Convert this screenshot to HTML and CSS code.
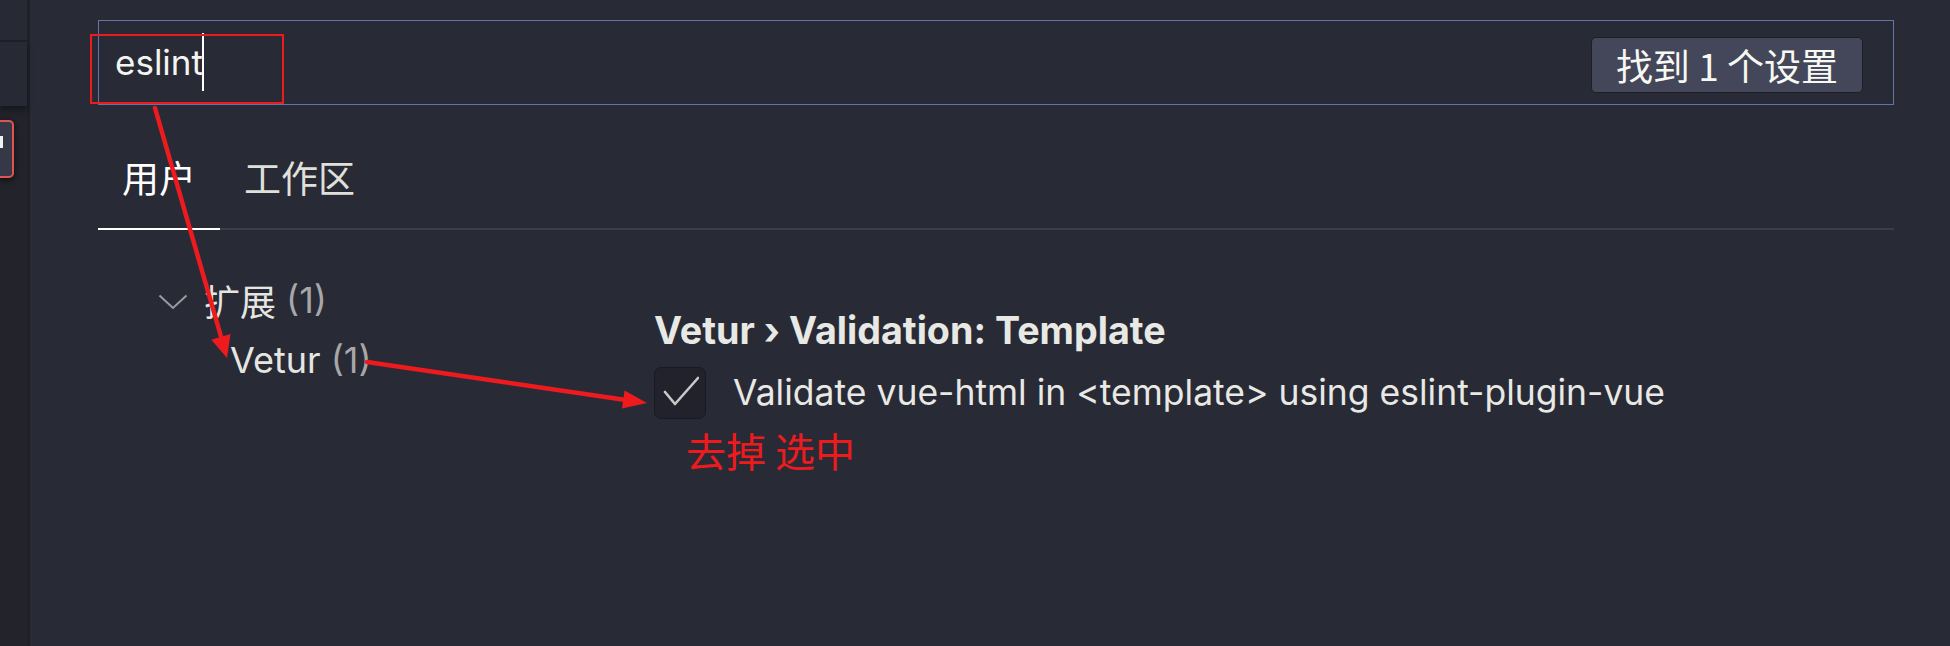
FILE: index.html
```html
<!DOCTYPE html>
<html lang="zh">
<head>
<meta charset="utf-8">
<title>Settings</title>
<link rel="stylesheet" href="styles.css">
</head>
<body>
<div class="app">
  <aside class="activity">
    <div class="act-top"></div>
    <div class="act-row"></div>
    <div class="act-rest">
      <div class="act-item"><span class="act-glyph"></span></div>
    </div>
  </aside>
  <main class="editor">
    <div class="search">
      <div class="query">eslint<span class="caret"></span></div>
      <div class="count">找到 1 个设置</div>
    </div>
    <div class="tabs">
      <div class="tab active">用户</div>
      <div class="tab">工作区</div>
    </div>
    <div class="body">
      <nav class="toc">
        <div class="toc-row group">
          <svg class="chev" width="30" height="16" viewBox="0 0 30 16"><polyline points="1.5,1.5 15,14 28.5,1.5" fill="none" stroke="#9b9ca0" stroke-width="2"/></svg>
          <span class="toc-label">扩展</span><span class="num">(1)</span>
        </div>
        <div class="toc-row sub">
          <span class="toc-label">Vetur</span><span class="num">(1)</span>
        </div>
      </nav>
      <section class="setting">
        <div class="title">Vetur › Validation: Template</div>
        <div class="check-row">
          <span class="checkbox">
            <svg width="40" height="34" viewBox="0 0 40 34"><polyline points="6,16 16,28 39,2" fill="none" stroke="#c9c9c9" stroke-width="2.6" stroke-linecap="round" stroke-linejoin="round"/></svg>
          </span>
          <span class="desc">Validate vue-html in &lt;template&gt; using eslint-plugin-vue</span>
        </div>
      </section>
    </div>
  </main>
  <svg class="annot" width="1950" height="646" viewBox="0 0 1950 646">
    <rect x="91" y="35" width="192" height="68" fill="none" stroke="#ee1b1e" stroke-width="2"/>
    <line x1="155" y1="108" x2="222" y2="340" stroke="#ee1b1e" stroke-width="4.5" stroke-linecap="round"/>
    <polygon points="227,358 230.5,334 211.3,339.7" fill="#ee1b1e"/>
    <line x1="367" y1="362" x2="626" y2="400" stroke="#ee1b1e" stroke-width="4.5" stroke-linecap="round"/>
    <polygon points="647,403 624.6,390.6 622,408.4" fill="#ee1b1e"/>
  </svg>
  <div class="note">去掉 选中</div>
</div>
</body>
</html>
```
FILE: styles.css
```css
* { box-sizing: border-box; }
html, body {
  margin: 0;
  padding: 0;
  background: #282a36;
}
body {
  width: 1950px;
  height: 646px;
  overflow: hidden;
  font-family: "Inter", "Noto Sans CJK SC", sans-serif;
  color: #e8e8e4;
}
.app {
  position: relative;
  display: flex;
  width: 1950px;
  height: 646px;
}
.activity {
  width: 30px;
  flex: none;
  display: flex;
  flex-direction: column;
  background: #22232b;
  border-right: 3px solid #1f2028;
}
.act-top {
  height: 42px;
  background: #272935;
  border-bottom: 2px solid #1e1f27;
}
.act-row {
  height: 64px;
  background: #272935;
  box-shadow: 0 4px 6px rgba(0,0,0,0.35);
}
.act-rest {
  flex: 1;
  padding-top: 14px;
}
.act-item {
  position: relative;
  width: 16px;
  height: 58px;
  margin-left: -2px;
  background: #363848;
  border: 2px solid #e05353;
  border-radius: 0 5px 5px 0;
  box-shadow: 0 2px 6px rgba(0,0,0,0.6);
}
.act-glyph {
  position: absolute;
  left: 0;
  top: 14px;
  width: 3px;
  height: 12px;
  background: #f0f0f0;
}
.editor {
  flex: 1;
  padding: 20px 56px 0 68px;
  display: flex;
  flex-direction: column;
}
.search {
  height: 85px;
  border: 1px solid #6474a8;
  display: flex;
  align-items: center;
  justify-content: space-between;
  padding: 0 30px 0 16px;
}
.query {
  display: flex;
  align-items: center;
  font-size: 35px;
  color: #f4f4f0;
  height: 60px;
  margin-top: -2px;
}
.caret {
  display: inline-block;
  width: 2px;
  height: 58px;
  background: #ffffff;
  margin-left: -1px;
}
.count {
  height: 56px;
  margin-top: 4px;
  padding: 0 24px;
  display: flex;
  align-items: center;
  background: #44475a;
  border: 1px solid #1d1e26;
  border-radius: 5px;
  color: #f8f8f2;
  font-size: 37px;
  font-family: "Noto Sans CJK SC", "Inter", sans-serif;
}
.tabs {
  display: flex;
  margin-top: 52px;
  border-bottom: 2px solid #3c3d45;
}
.tab {
  padding: 0 24px 30px;
  font-size: 37px;
  line-height: 41px;
  color: #e0e0db;
  font-family: "Noto Sans CJK SC", sans-serif;
  margin-bottom: -2px;
  border-bottom: 2px solid transparent;
}
.tab.active {
  color: #ffffff;
  border-bottom-color: #ffffff;
}
.body {
  display: flex;
  flex: 1;
}
.toc {
  width: 556px;
  flex: none;
  padding-top: 40px;
}
.toc-row {
  height: 60px;
  display: flex;
  align-items: center;
  font-size: 36px;
  color: #e6e6e1;
}
.toc-row.group {
  padding-left: 60px;
}
.chev {
  margin-right: 16px;
  margin-top: 4px;
}
.toc-row.sub {
  padding-left: 132px;
}
.toc-label {
  margin-right: 10px;
}
.num {
  color: #a7a7a7;
}
.setting {
  padding-top: 77px;
}
.title {
  font-size: 37.7px;
  line-height: 46px;
  font-weight: 700;
  color: #e8e8e4;
}
.check-row {
  display: flex;
  align-items: center;
  margin-top: 14px;
}
.checkbox {
  width: 52px;
  height: 52px;
  flex: none;
  background: #21222c;
  border: 1px solid #191a21;
  border-radius: 7px;
  display: flex;
  align-items: center;
  justify-content: center;
}
.checkbox svg {
  margin-left: -2px;
}
.desc {
  margin-left: 27px;
  font-size: 35.5px;
  color: #e8e8e4;
  margin-top: -1px;
}
.annot {
  position: absolute;
  left: 0;
  top: 0;
  pointer-events: none;
}
.note {
  position: absolute;
  left: 686px;
  top: 424px;
  font-size: 40px;
  line-height: 52px;
  color: #ee1b1e;
  font-family: "Noto Sans CJK SC", sans-serif;
}
```
